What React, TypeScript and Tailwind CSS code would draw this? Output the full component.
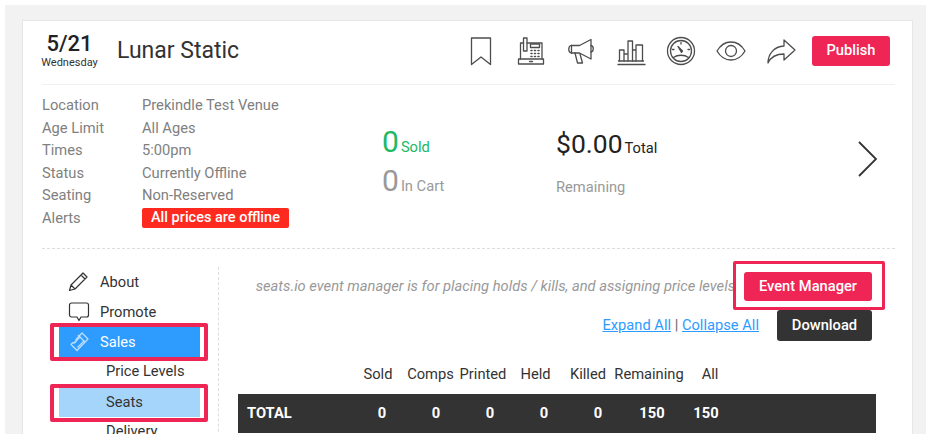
import * as React from "react";

const details = [
  ["Location", "Prekindle Test Venue"],
  ["Age Limit", "All Ages"],
  ["Times", "5:00pm"],
  ["Status", "Currently Offline"],
  ["Seating", "Non-Reserved"],
];

const columns = ["Sold", "Comps", "Printed", "Held", "Killed", "Remaining", "All"];
const totals = ["0", "0", "0", "0", "0", "150", "150"];
const headerWidths = ["w-[52px]", "w-[53px]", "w-[52px]", "w-[53px]", "w-[52px]", "w-[70px]", "w-[52px]"];

function Icon({ children }: { children: React.ReactNode }) {
  return (
    <svg width="30" height="30" viewBox="0 0 30 30" fill="none" stroke="#4d4d4d" strokeWidth="1.300" strokeLinejoin="round" strokeLinecap="round">
      {children}
    </svg>
  );
}

function TopIcons() {
  return (
    <div className="flex items-center gap-5">
      {/* bookmark */}
      <Icon>
        <path d="M5.500 2h19v26.500l-9.500-7.500-9.500 7.500z" />
      </Icon>
      {/* cash register */}
      <Icon>
        <path d="M4.500 23V7h3M11 7h15v16" />
        <path d="M7.500 2h3.500v13h-3.500z" />
        <path d="M14.500 8h9v3.500h-9z" />
        <path d="M2.500 23h25v5h-25z" />
        <path d="M13.500 25.500h3" />
        <path d="M15 14.500h1M18.500 14.500h1M22 14.500h1M15 17.500h1M18.500 17.500h1M22 17.500h1M15 20.500h1M18.500 20.500h1M22 20.500h1" strokeWidth="1.600" />
      </Icon>
      {/* megaphone */}
      <Icon>
        <path d="M5 9.500h8.500L25 3.500v19.500l-11.500-6H5c-3-1-3-6.500 0-7.500z" />
        <path d="M25 9.500c3 .5 3 6 0 6.500" />
        <path d="M9 17l2.500 10h5L14 18" />
        <path d="M5.500 9.500v7.500" />
      </Icon>
      {/* bar chart */}
      <Icon>
        <path d="M2 28.500h27" />
        <path d="M3.500 25V14H8v11M8 25V18h4v7M12 25V5h4.500v20M16.500 25V14H20v11M20 25V9h6.500v16" />
        <path d="M2.500 25h25" />
      </Icon>
      {/* gauge */}
      <Icon>
        <circle cx="15" cy="15" r="13.500" />
        <circle cx="15" cy="15" r="10.500" />
        <path d="M12 10.500l3.500 6 1-1.500z" fill="#4d4d4d" />
        <path d="M7.500 21.500c4-3 11-3 15 0" />
        <path d="M6.500 13.500h1.500M22 13.500h1.500M15 6.500V8" />
      </Icon>
      {/* eye */}
      <Icon>
        <path d="M1 15c7-12 21-12 28 0-7 12-21 12-28 0z" />
        <circle cx="15" cy="15" r="5.500" />
      </Icon>
      {/* share arrow */}
      <Icon>
        <path d="M18 4l11 10-11 10v-6c-7 0-13 2.500-16 9 0-9 6-16.500 16-17z" />
      </Icon>
    </div>
  );
}

function NavIcon({ name, light }: { name: string; light?: boolean }) {
  const stroke = light ? "#bfe0ff" : "#333";
  return (
    <svg width="22" height="24" viewBox="0 0 22 24" fill="none" stroke={stroke} strokeWidth="1.200" strokeLinejoin="round">
      {name === "pencil" && <path d="M15 3l4 4L7 19l-5.500 1.500L3 15zM13 5l4 4M3 15l4 4" />}
      {name === "bubble" && (
        <path d="M3.500 3h15A2 2 0 0 1 20.500 5v10a2 2 0 0 1-2 2H13l-2 3.500L9 17H3.500a2 2 0 0 1-2-2V5a2 2 0 0 1 2-2z" />
      )}
      {name === "ticket" && (
        <g>
          <path d="M14 3l6 6-11 11.500-6-6 2-2c1 .5 2 0 2.500-.5s1-1.500.5-2.500z" />
          <path d="M10 5l7 7M12 7l-6.500 6.500M16 11l-6.500 6.500" />
        </g>
      )}
    </svg>
  );
}

export default function App() {
  return (
    <div className="h-[434px] w-[926px] overflow-hidden bg-white pl-[5px] pt-[5px] font-['Roboto',sans-serif]">
      <div className="h-full bg-[#f2f2f2] pl-[17px] pr-[13px] pt-[15px]">
        <div className="relative h-[420px] border border-[#e6e6e6] bg-white pl-[19px] pr-[17px]">
          {/* header */}
          <div className="flex h-[64px] items-center border-b border-[#f0f0f0] pr-[5px]">
            <div className="-mt-[3px] flex w-[75px] flex-col">
              <span className="w-[55px] text-center text-[22px] leading-[24px] font-medium text-[#222]">5/21</span>
              <span className="w-[57px] -translate-x-[1px] text-center text-[11px] leading-[14px] text-[#333]">Wednesday</span>
            </div>
            <h1 className="-mt-[2px] text-[23px] font-normal text-[#333]">Lunar Static</h1>
            <div className="-mt-[4px] ml-auto flex items-center gap-[16px]">
              <TopIcons />
              <button className="h-[30px] w-[78px] rounded-[3px] bg-[#ee2555] text-[14.700px] font-medium text-white">Publish</button>
            </div>
          </div>

          {/* event summary */}
          <div className="flex h-[164px] border-b border-dashed border-[#dddddd] pt-[9px]">
            <div className="w-[340px] text-[14.700px] leading-[22.500px] text-[#808080]">
              {details.map(([label, value]) => (
                <div key={label} className="flex">
                  <span className="w-[100px]">{label}</span>
                  <span>{value}</span>
                </div>
              ))}
              <div className="flex">
                <span className="w-[100px]">Alerts</span>
                <span className="h-[20px] self-center rounded-[2px] bg-[#ff2a1f] px-[9px] text-[14.500px] leading-[20px] font-medium text-white">All prices are offline</span>
              </div>
            </div>
            <div className="w-[174px] pt-[25px]">
              <div className="flex h-[39px] items-baseline gap-[2px] text-[#22b864]">
                <span className="text-[30px]">0</span>
                <span className="text-[14.700px]">Sold</span>
              </div>
              <div className="flex h-[39px] items-baseline gap-[2px] text-[#999]">
                <span className="text-[30px]">0</span>
                <span className="text-[14.700px]">In Cart</span>
              </div>
            </div>
            <div className="pt-[30px]">
              <div className="flex h-[40px] items-baseline gap-[2px] text-[#222]">
                <span className="text-[26.500px]">$0.00</span>
                <span className="text-[14.700px]">Total</span>
              </div>
              <div className="pt-[12px] text-[14.700px] text-[#999]">Remaining</div>
            </div>
            <div className="ml-auto pr-[17px] pt-[47px]">
              <svg width="21" height="36" viewBox="0 0 21 36" fill="none" stroke="#333" strokeWidth="1.800">
                <path d="M2 1l17 17L2 35" />
              </svg>
            </div>
          </div>

          {/* bottom section */}
          <div className="flex pt-[18px]">
            <nav className="h-[200px] w-[177px] shrink-0 border-r border-dashed border-[#dddddd] pl-[17px] pr-[18px] text-[14.700px] leading-[30px] text-[#333]">
              <div className="flex h-[30px] items-center gap-[10px] pl-[9px]">
                <NavIcon name="pencil" />
                About
              </div>
              <div className="flex h-[30px] items-center gap-[10px] pl-[9px]">
                <NavIcon name="bubble" />
                Promote
              </div>
              <div className="flex h-[30px] items-center gap-[10px] bg-[#2e9bff] pl-[9px] text-white">
                <NavIcon name="ticket" light />
                Sales
              </div>
              <div className="h-[30px] pl-[47px] leading-[28px]">Price Levels</div>
              <div className="h-[30px] bg-[#a6d5fb] pl-[47px]">Seats</div>
              <div className="h-[30px] pl-[47px] leading-[28px]">Delivery</div>
            </nav>
            <div className="min-w-0 flex-1 pl-[19px] pr-[19px]">
              <div className="flex h-[43px] items-center justify-end gap-[9px] pb-[4px] pr-[4px]">
                <p className="text-[14.700px] whitespace-nowrap text-[#999] italic">
                  seats.io event manager is for placing holds / kills, and assigning price levels
                </p>
                <button className="h-[29px] w-[128px] shrink-0 rounded-[3px] bg-[#ee2555] text-[14.700px] font-medium text-white">Event Manager</button>
              </div>
              <div className="flex h-[31px] items-center justify-end gap-[18px] pr-[4px]">
                <p className="text-[14.700px] text-[#666]">
                  <a className="text-[#2e9bff] underline">Expand All</a> | <a className="text-[#2e9bff] underline">Collapse All</a>
                </p>
                <button className="h-[31px] w-[95px] rounded-[3px] bg-[#333333] text-[14.700px] font-medium text-white">Download</button>
              </div>
              <div className="mt-[22px] flex h-[22px] pl-[114px] text-[14.700px] leading-[22px] text-[#333]">
                {columns.map((c, i) => (
                  <span key={c} className={`${headerWidths[i]} text-center whitespace-nowrap`}>{c}</span>
                ))}
              </div>
              <div className="mt-[9px] flex h-[39px] items-center bg-[#333333] pl-[9px] text-[14.700px] font-bold text-white">
                <span className="w-[108px]">TOTAL</span>
                {totals.map((t, i) => (
                  <span key={i} className="w-[54px] text-center">{t}</span>
                ))}
              </div>
            </div>
          </div>

          {/* red highlight annotations */}
          <div className="absolute left-[27px] top-[302px] h-[38px] w-[158px] rounded-[2px] border-4 border-[#ee2555]" />
          <div className="absolute left-[27px] top-[363px] h-[38px] w-[158px] rounded-[2px] border-4 border-[#ee2555]" />
          <div className="absolute left-[710px] top-[240px] h-[49px] w-[152px] rounded-[2px] border-[3px] border-[#ee2555]" />
        </div>
      </div>
    </div>
  );
}
